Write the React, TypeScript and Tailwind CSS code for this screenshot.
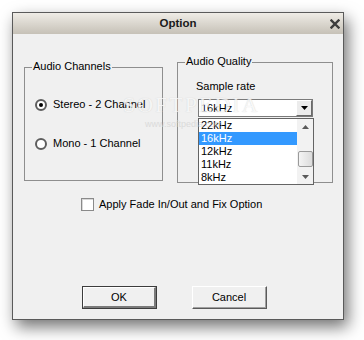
import React from "react";

const font = { fontFamily: '"Liberation Sans", Arial, sans-serif' };

function Radio({ checked, label }: { checked?: boolean; label: string }) {
  return (
    <div className="flex items-center h-[13px]">
      <span className="w-[12px] h-[12px] rounded-full border-2 border-[#5e5e5e] bg-white flex items-center justify-center">
        {checked && <span className="w-[4px] h-[4px] rounded-full bg-black" />}
      </span>
      <span className="ml-[6px] text-[11px] leading-[13px] text-black">{label}</span>
    </div>
  );
}

export default function App() {
  const items = ["22kHz", "16kHz", "12kHz", "11kHz", "8kHz"];
  return (
    <div className="w-[364px] h-[340px] bg-white overflow-hidden" style={font}>
      <div className="ml-[12px] mt-[12px] w-[332px] h-[308px] border border-[#5a5a5a] bg-[#f0f0f0] flex flex-col relative shadow-[4px_7px_15px_rgba(0,0,0,0.55)]">
        {/* title bar */}
        <div className="h-[21px] bg-gradient-to-b from-[#efece6] to-[#c6c1b7] flex items-center justify-center relative">
          <span className="text-[11.5px] font-bold text-[#1a1a1a] leading-none">Option</span>
          <span className="absolute right-[3px] top-[5px] w-[11px] h-[11px] flex items-center justify-center">
            <svg width="10" height="10" viewBox="0 0 10 10">
              <path d="M1.5 1.5 L8.5 8.5 M8.5 1.5 L1.5 8.5" stroke="#3c3c3c" strokeWidth="2.4" strokeLinecap="square" />
            </svg>
          </span>
        </div>
        {/* body */}
        <div className="flex-1 flex flex-col relative">
          <div className="flex items-start pl-[11px] gap-[14px]">
            {/* Audio Channels */}
            <div className="mt-[33px] w-[139px] h-[114px] border border-[#8e8e8e] relative">
              <span className="absolute left-[7px] -top-[8px] px-[1px] bg-[#f0f0f0] text-[11px] leading-[13px] text-black">
                Audio Channels
              </span>
              <div className="pl-[10px] pt-[30px] flex flex-col gap-[26px]">
                <Radio checked label="Stereo - 2 Channel" />
                <Radio label="Mono - 1 Channel" />
              </div>
            </div>
            {/* Audio Quality */}
            <div className="mt-[28px] w-[156px] h-[121px] border border-[#8e8e8e] relative">
              <span className="absolute left-[7px] -top-[8px] px-[1px] bg-[#f0f0f0] text-[11px] leading-[13px] text-black">
                Audio Quality
              </span>
              <div className="pl-[18px] pt-[17px] text-[11px] leading-[13px] text-black">Sample rate</div>
              <div className="ml-[20px] mt-[6px] w-[115px] h-[18px] border border-[#7a7a7a] bg-white flex">
                <span className="flex-1 pl-[2px] text-[11px] leading-[16px] text-black">16kHz</span>
                <span className="w-[16px] h-full bg-[#ececec] border-t border-l border-t-white border-l-white border-r border-b border-r-[#6a6a6a] border-b-[#6a6a6a] flex items-center justify-center">
                  <svg width="7" height="4" viewBox="0 0 7 4">
                    <path d="M0 0 H7 L3.5 4 Z" fill="#000" />
                  </svg>
                </span>
              </div>
              {/* dropdown list */}
              <div className="absolute left-[20px] top-[55px] w-[116px] h-[67px] border border-[#646464] bg-white flex z-10">
                <div className="flex-1 flex flex-col">
                  {items.map((it) => (
                    <div
                      key={it}
                      className={
                        it === "16kHz"
                          ? "h-[13px] pl-[2px] text-[11px] leading-[13px] bg-[#3399ff] text-white"
                          : "h-[13px] pl-[2px] text-[11px] leading-[13px] text-black"
                      }
                    >
                      {it}
                    </div>
                  ))}
                </div>
                <div className="w-[16px] h-full bg-[#f2f2f2] flex flex-col items-center">
                  <div className="h-[16px] flex items-center justify-center">
                    <svg width="7" height="4" viewBox="0 0 7 4">
                      <path d="M0 4 H7 L3.5 0 Z" fill="#5a5a5a" />
                    </svg>
                  </div>
                  <div className="mt-[16px] w-[15px] h-[16px] rounded-[2px] border border-[#9a9a9a] bg-gradient-to-r from-[#f4f4f4] to-[#dcdcdc]" />
                  <div className="flex-1" />
                  <div className="h-[14px] flex items-center justify-center">
                    <svg width="7" height="4" viewBox="0 0 7 4">
                      <path d="M0 0 H7 L3.5 4 Z" fill="#5a5a5a" />
                    </svg>
                  </div>
                </div>
              </div>
            </div>
          </div>
          {/* checkbox */}
          <div className="mt-[15px] pl-[68px] flex items-center h-[13px]">
            <span className="w-[13px] h-[13px] border border-[#8a8a8a] bg-white shadow-[inset_1px_1px_0_#d8d8d8]" />
            <span className="ml-[5px] text-[11px] leading-[13px] text-black">Apply Fade In/Out and Fix Option</span>
          </div>
          {/* buttons */}
          <div className="mt-[75px] pl-[69px] flex gap-[35px]">
            <button className="w-[75px] h-[23px] border border-[#3c3c3c] bg-[#f0f0f0] p-0">
              <span className="w-full h-full flex items-center justify-center border-t border-l border-t-white border-l-white border-r-2 border-b-2 border-r-[#7a7a7a] border-b-[#7a7a7a] text-[11px] text-black">
                OK
              </span>
            </button>
            <button className="w-[75px] h-[23px] border-t border-l border-t-white border-l-white border-r border-b border-r-[#5a5a5a] border-b-[#5a5a5a] bg-[#f0f0f0] p-0">
              <span className="w-full h-full flex items-center justify-center border-r border-b border-r-[#a0a0a0] border-b-[#a0a0a0] text-[11px] text-black">
                Cancel
              </span>
            </button>
          </div>
          {/* watermark */}
          <div
            className="absolute left-[110px] top-[54px] text-[22px] tracking-[2px] text-[#f7f7f7] opacity-80 pointer-events-none z-20"
            style={{ fontFamily: '"Liberation Serif", serif', textShadow: "0 0 1px #c8c8c8" }}
          >
            SOFTPEDIA
          </div>
          <div className="absolute left-[132px] top-[84px] text-[9px] text-[#d2d2d2] opacity-70 pointer-events-none z-20">
            www.softpedia.com
          </div>
        </div>
      </div>
    </div>
  );
}
